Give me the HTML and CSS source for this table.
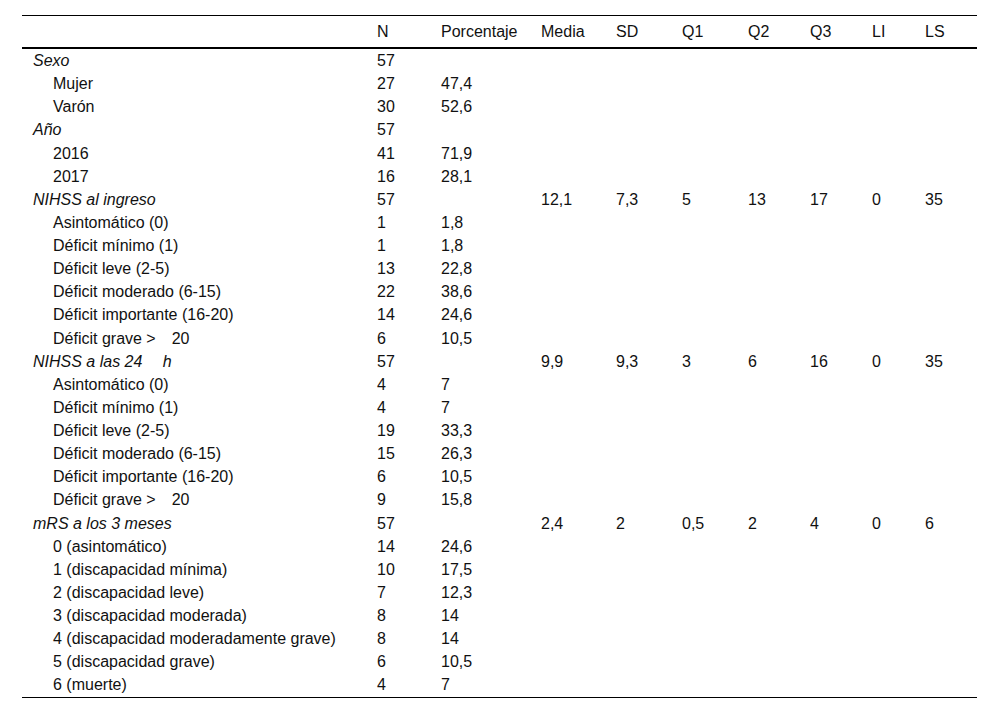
FILE: index.html
```html
<!DOCTYPE html>
<html lang="es">
<head>
<meta charset="utf-8">
<title>Tabla</title>
<link rel="stylesheet" href="styles.css">
</head>
<body>
<div class="wrap">
<table class="data">
<colgroup>
<col class="c-label"><col class="c-n"><col class="c-pct"><col class="c-media"><col class="c-sd"><col class="c-q1"><col class="c-q2"><col class="c-q3"><col class="c-li"><col class="c-ls">
</colgroup>
<thead>
<tr><th></th><th>N</th><th>Porcentaje</th><th>Media</th><th>SD</th><th>Q1</th><th>Q2</th><th>Q3</th><th>LI</th><th>LS</th></tr>
</thead>
<tbody>
<tr class="grp"><td>Sexo</td><td>57</td><td></td><td></td><td></td><td></td><td></td><td></td><td></td><td></td></tr>
<tr class="sub"><td>Mujer</td><td>27</td><td>47,4</td><td></td><td></td><td></td><td></td><td></td><td></td><td></td></tr>
<tr class="sub"><td>Varón</td><td>30</td><td>52,6</td><td></td><td></td><td></td><td></td><td></td><td></td><td></td></tr>
<tr class="grp"><td>Año</td><td>57</td><td></td><td></td><td></td><td></td><td></td><td></td><td></td><td></td></tr>
<tr class="sub"><td>2016</td><td>41</td><td>71,9</td><td></td><td></td><td></td><td></td><td></td><td></td><td></td></tr>
<tr class="sub"><td>2017</td><td>16</td><td>28,1</td><td></td><td></td><td></td><td></td><td></td><td></td><td></td></tr>
<tr class="grp"><td>NIHSS al ingreso</td><td>57</td><td></td><td>12,1</td><td>7,3</td><td>5</td><td>13</td><td>17</td><td>0</td><td>35</td></tr>
<tr class="sub"><td>Asintomático (0)</td><td>1</td><td>1,8</td><td></td><td></td><td></td><td></td><td></td><td></td><td></td></tr>
<tr class="sub"><td>Déficit mínimo (1)</td><td>1</td><td>1,8</td><td></td><td></td><td></td><td></td><td></td><td></td><td></td></tr>
<tr class="sub"><td>Déficit leve (2-5)</td><td>13</td><td>22,8</td><td></td><td></td><td></td><td></td><td></td><td></td><td></td></tr>
<tr class="sub"><td>Déficit moderado (6-15)</td><td>22</td><td>38,6</td><td></td><td></td><td></td><td></td><td></td><td></td><td></td></tr>
<tr class="sub"><td>Déficit importante (16-20)</td><td>14</td><td>24,6</td><td></td><td></td><td></td><td></td><td></td><td></td><td></td></tr>
<tr class="sub"><td>Déficit grave &gt;&emsp;20</td><td>6</td><td>10,5</td><td></td><td></td><td></td><td></td><td></td><td></td><td></td></tr>
<tr class="grp"><td>NIHSS a las 24&emsp; h</td><td>57</td><td></td><td>9,9</td><td>9,3</td><td>3</td><td>6</td><td>16</td><td>0</td><td>35</td></tr>
<tr class="sub"><td>Asintomático (0)</td><td>4</td><td>7</td><td></td><td></td><td></td><td></td><td></td><td></td><td></td></tr>
<tr class="sub"><td>Déficit mínimo (1)</td><td>4</td><td>7</td><td></td><td></td><td></td><td></td><td></td><td></td><td></td></tr>
<tr class="sub"><td>Déficit leve (2-5)</td><td>19</td><td>33,3</td><td></td><td></td><td></td><td></td><td></td><td></td><td></td></tr>
<tr class="sub"><td>Déficit moderado (6-15)</td><td>15</td><td>26,3</td><td></td><td></td><td></td><td></td><td></td><td></td><td></td></tr>
<tr class="sub"><td>Déficit importante (16-20)</td><td>6</td><td>10,5</td><td></td><td></td><td></td><td></td><td></td><td></td><td></td></tr>
<tr class="sub"><td>Déficit grave &gt;&emsp;20</td><td>9</td><td>15,8</td><td></td><td></td><td></td><td></td><td></td><td></td><td></td></tr>
<tr class="grp"><td>mRS a los 3 meses</td><td>57</td><td></td><td>2,4</td><td>2</td><td>0,5</td><td>2</td><td>4</td><td>0</td><td>6</td></tr>
<tr class="sub"><td>0 (asintomático)</td><td>14</td><td>24,6</td><td></td><td></td><td></td><td></td><td></td><td></td><td></td></tr>
<tr class="sub"><td>1 (discapacidad mínima)</td><td>10</td><td>17,5</td><td></td><td></td><td></td><td></td><td></td><td></td><td></td></tr>
<tr class="sub"><td>2 (discapacidad leve)</td><td>7</td><td>12,3</td><td></td><td></td><td></td><td></td><td></td><td></td><td></td></tr>
<tr class="sub"><td>3 (discapacidad moderada)</td><td>8</td><td>14</td><td></td><td></td><td></td><td></td><td></td><td></td><td></td></tr>
<tr class="sub"><td>4 (discapacidad moderadamente grave)</td><td>8</td><td>14</td><td></td><td></td><td></td><td></td><td></td><td></td><td></td></tr>
<tr class="sub"><td>5 (discapacidad grave)</td><td>6</td><td>10,5</td><td></td><td></td><td></td><td></td><td></td><td></td><td></td></tr>
<tr class="sub"><td>6 (muerte)</td><td>4</td><td>7</td><td></td><td></td><td></td><td></td><td></td><td></td><td></td></tr>
</tbody>
</table>
</div>
</body>
</html>
```

FILE: styles.css
```css
html, body {
  margin: 0;
  padding: 0;
  background: #ffffff;
}

.wrap {
  padding: 15px 23px 0 22px;
}

.data {
  width: 955px;
  table-layout: fixed;
  border-collapse: collapse;
  font-family: "Liberation Sans", Arial, sans-serif;
  font-size: 16px;
  color: #111;
  border-top: 1px solid #000;
  border-bottom: 1px solid #000;
}

.c-label { width: 344px; }
.c-n { width: 64px; }
.c-pct { width: 100px; }
.c-media { width: 75px; }
.c-sd { width: 66px; }
.c-q1 { width: 66px; }
.c-q2 { width: 62px; }
.c-q3 { width: 62px; }
.c-li { width: 53px; }
.c-ls { width: 63px; }

.data th {
  font-weight: normal;
  text-align: left;
  vertical-align: middle;
  height: 30px;
  padding: 1px 0 0 11px;
  line-height: 18px;
  border-bottom: 2px solid #000;
}

.data td {
  text-align: left;
  vertical-align: middle;
  height: 22.14px;
  padding: 1px 0 0 11px;
  line-height: 18px;
  white-space: nowrap;
}

.grp td:first-child {
  font-style: italic;
}

.sub td:first-child {
  padding-left: 31px;
}
```
